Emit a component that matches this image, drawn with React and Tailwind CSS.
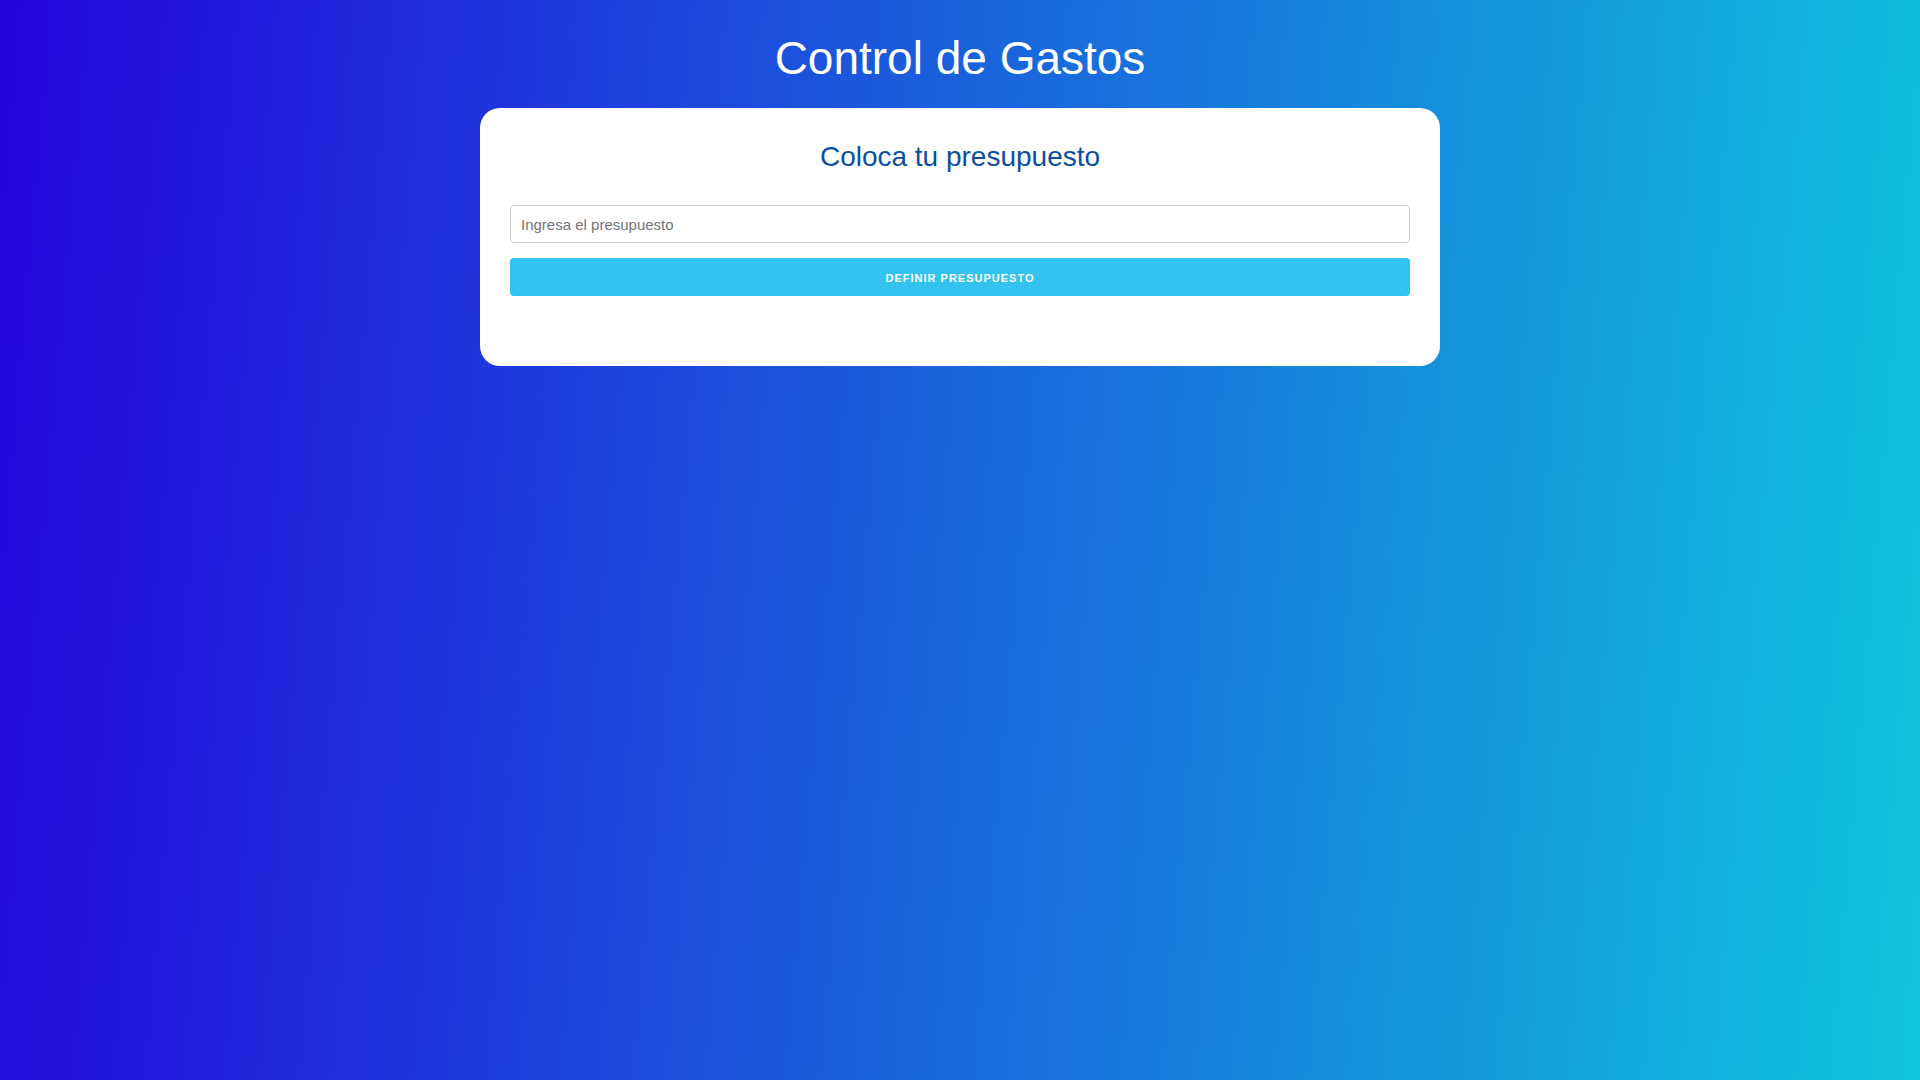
export default function App() {
  return (
    <div className="min-h-screen w-full bg-[linear-gradient(95deg,#2404dc,#0fc6dc)] font-['Liberation_Sans',Arial,sans-serif] flex flex-col items-center pt-[35px]">
      <h1 className="text-[46px] leading-[46px] text-white font-normal m-0">Control de Gastos</h1>
      <div className="mt-[27px] w-[960px] bg-white rounded-[20px] px-[30px] pt-[32px] pb-[70px]">
        <h2 className="text-[28px] leading-[34px] text-[#0a4f9f] font-normal text-center mb-[31px]">Coloca tu presupuesto</h2>
        <form className="flex flex-col gap-[15px]" onSubmit={(e) => e.preventDefault()}>
          <input
            type="number"
            placeholder="Ingresa el presupuesto"
            className="h-[38px] w-full border border-[#d1d1d1] rounded-[4px] px-[10px] text-[15px] text-[#333] placeholder:text-[#757575] outline-none bg-white"
          />
          <button
            type="submit"
            className="h-[38px] w-full rounded-[4px] bg-[#33c3f0] text-white text-[11px] font-bold tracking-[1px] uppercase pt-[3px]"
          >
            Definir Presupuesto
          </button>
        </form>
      </div>
    </div>
  );
}
